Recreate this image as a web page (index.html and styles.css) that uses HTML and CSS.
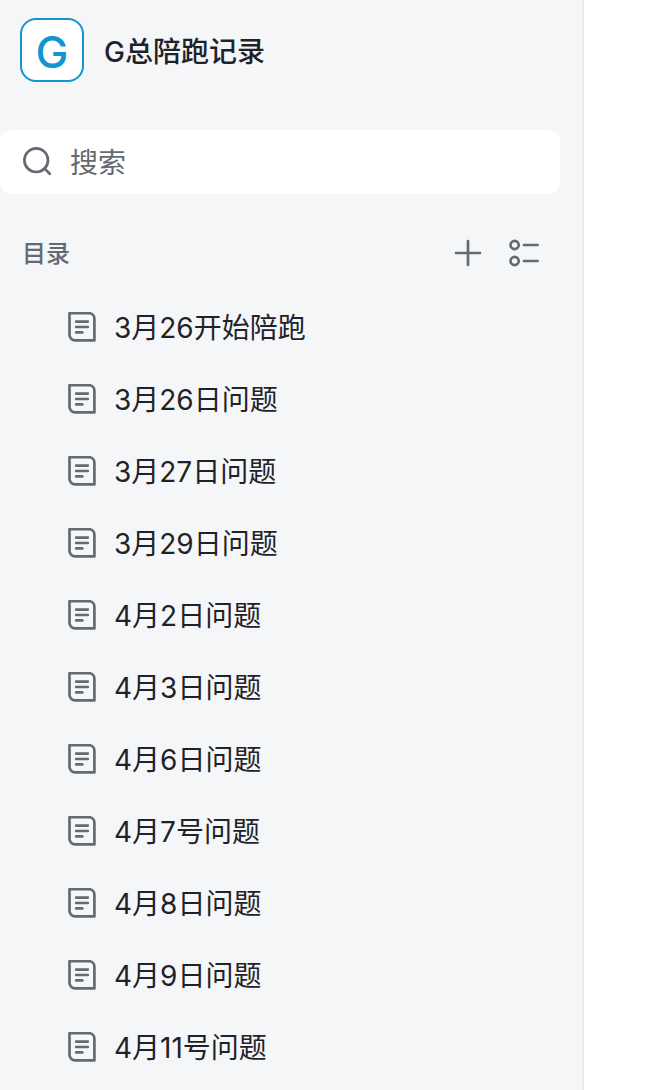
FILE: index.html
```html
<!DOCTYPE html>
<html lang="zh-CN">
<head>
    <meta charset="UTF-8">
    <meta name="viewport" content="width=device-width, initial-scale=1.0">
    <title>G总陪跑记录</title>
    <link rel="stylesheet" href="styles.css">
</head>
<body>
    <svg class="sprite" aria-hidden="true">
        <symbol id="icon-doc" viewBox="0 0 32 32">
            <path d="M3.5 1.2H23a5.4 5.4 0 0 1 5.4 5.4V28.4H9.2a5.7 5.7 0 0 1-5.7-5.7Z" stroke-linejoin="round"/>
            <path d="M10.2 9.6h11.6M10.2 15h11.6M10.2 20.4h6.2" stroke-linecap="round"/>
        </symbol>
    </svg>

    <div class="layout">
        <aside class="sidebar">
            <header class="book">
                <span class="book-logo">G</span>
                <h1>G总陪跑记录</h1>
            </header>

            <label class="search">
                <svg viewBox="0 0 32 32" aria-hidden="true">
                    <circle cx="14.2" cy="14.2" r="11.8"/>
                    <path d="M22.6 22.6l5.2 5.2" stroke-linecap="round"/>
                </svg>
                <input type="search" placeholder="搜索" aria-label="搜索">
            </label>

            <div class="catalog-head">
                <h2>目录</h2>
                <button type="button" aria-label="新建">
                    <svg viewBox="0 0 32 32">
                        <path d="M16 4v24M4 16h24" stroke-linecap="round"/>
                    </svg>
                </button>
                <button type="button" aria-label="目录管理">
                    <svg viewBox="0 0 32 32">
                        <circle cx="6.6" cy="8" r="4.1"/>
                        <circle cx="6.6" cy="24" r="4.1"/>
                        <path d="M16 8h13.6M16 24h13.6" stroke-linecap="round"/>
                    </svg>
                </button>
            </div>

            <nav>
                <ul class="catalog">
                    <li><a href="#"><svg><use href="#icon-doc"/></svg>3月26开始陪跑</a></li>
                    <li><a href="#"><svg><use href="#icon-doc"/></svg>3月26日问题</a></li>
                    <li><a href="#"><svg><use href="#icon-doc"/></svg>3月27日问题</a></li>
                    <li><a href="#"><svg><use href="#icon-doc"/></svg>3月29日问题</a></li>
                    <li><a href="#"><svg><use href="#icon-doc"/></svg>4月2日问题</a></li>
                    <li><a href="#"><svg><use href="#icon-doc"/></svg>4月3日问题</a></li>
                    <li><a href="#"><svg><use href="#icon-doc"/></svg>4月6日问题</a></li>
                    <li><a href="#"><svg><use href="#icon-doc"/></svg>4月7号问题</a></li>
                    <li><a href="#"><svg><use href="#icon-doc"/></svg>4月8日问题</a></li>
                    <li><a href="#"><svg><use href="#icon-doc"/></svg>4月9日问题</a></li>
                    <li><a href="#"><svg><use href="#icon-doc"/></svg>4月11号问题</a></li>
                </ul>
            </nav>
        </aside>
        <main></main>
    </div>
</body>
</html>
```
FILE: styles.css
```css
* {
    box-sizing: border-box;
}
body {
    margin: 0;
    font-family: Inter, "Noto Sans CJK SC", sans-serif;
    font-size: 28px;
    color: #1f2329;
    background-color: #fff;
}
h1, h2, ul {
    margin: 0;
    padding: 0;
}
svg {
    display: block;
    flex: none;
    width: 32px;
    height: 32px;
    fill: none;
    stroke: #646a73;
    stroke-width: 2.7;
}
.sprite {
    display: none;
}
.layout {
    display: grid;
    grid-template-columns: minmax(0, 1fr) 64px;
    min-height: 100vh;
}
.sidebar {
    padding-top: 18px;
    background-color: #f5f6f8;
    border-right: 2px solid #ebecee;
}

.book {
    display: flex;
    align-items: center;
    gap: 20px;
    padding: 0 20px;
}
.book-logo {
    width: 64px;
    height: 64px;
    border: 2px solid #1296cf;
    border-radius: 16px;
    background-color: #fff;
    color: #1296cf;
    font-size: 44px;
    font-weight: 500;
    line-height: 64px;
    text-align: center;
}
.book h1 {
    padding-top: 4px;
    font-size: 28px;
    font-weight: 500;
    line-height: 40px;
}

.search {
    display: flex;
    align-items: center;
    gap: 16px;
    height: 64px;
    margin: 48px 22px 0 0;
    padding: 0 22px;
    border-radius: 12px;
    background-color: #fff;
}
.search input {
    flex: 1;
    min-width: 0;
    padding: 2px 0 0;
    border: none;
    outline: none;
    background: none;
    font: inherit;
    color: inherit;
}
.search input::placeholder {
    color: #646a73;
}

.catalog-head {
    display: flex;
    align-items: center;
    gap: 24px;
    height: 48px;
    margin-top: 35px;
    padding: 0 42px 0 22px;
}
.catalog-head h2 {
    flex: 1;
    padding-top: 2px;
    font-size: 24px;
    font-weight: 500;
    line-height: 36px;
    color: #646a73;
}
.catalog-head button {
    padding: 0;
    border: none;
    background: none;
    cursor: pointer;
}

.catalog {
    margin-top: 15px;
    list-style: none;
}
.catalog a {
    display: flex;
    align-items: center;
    gap: 16px;
    height: 72px;
    padding-left: 66px;
    line-height: 40px;
    color: inherit;
    text-decoration: none;
}
```
